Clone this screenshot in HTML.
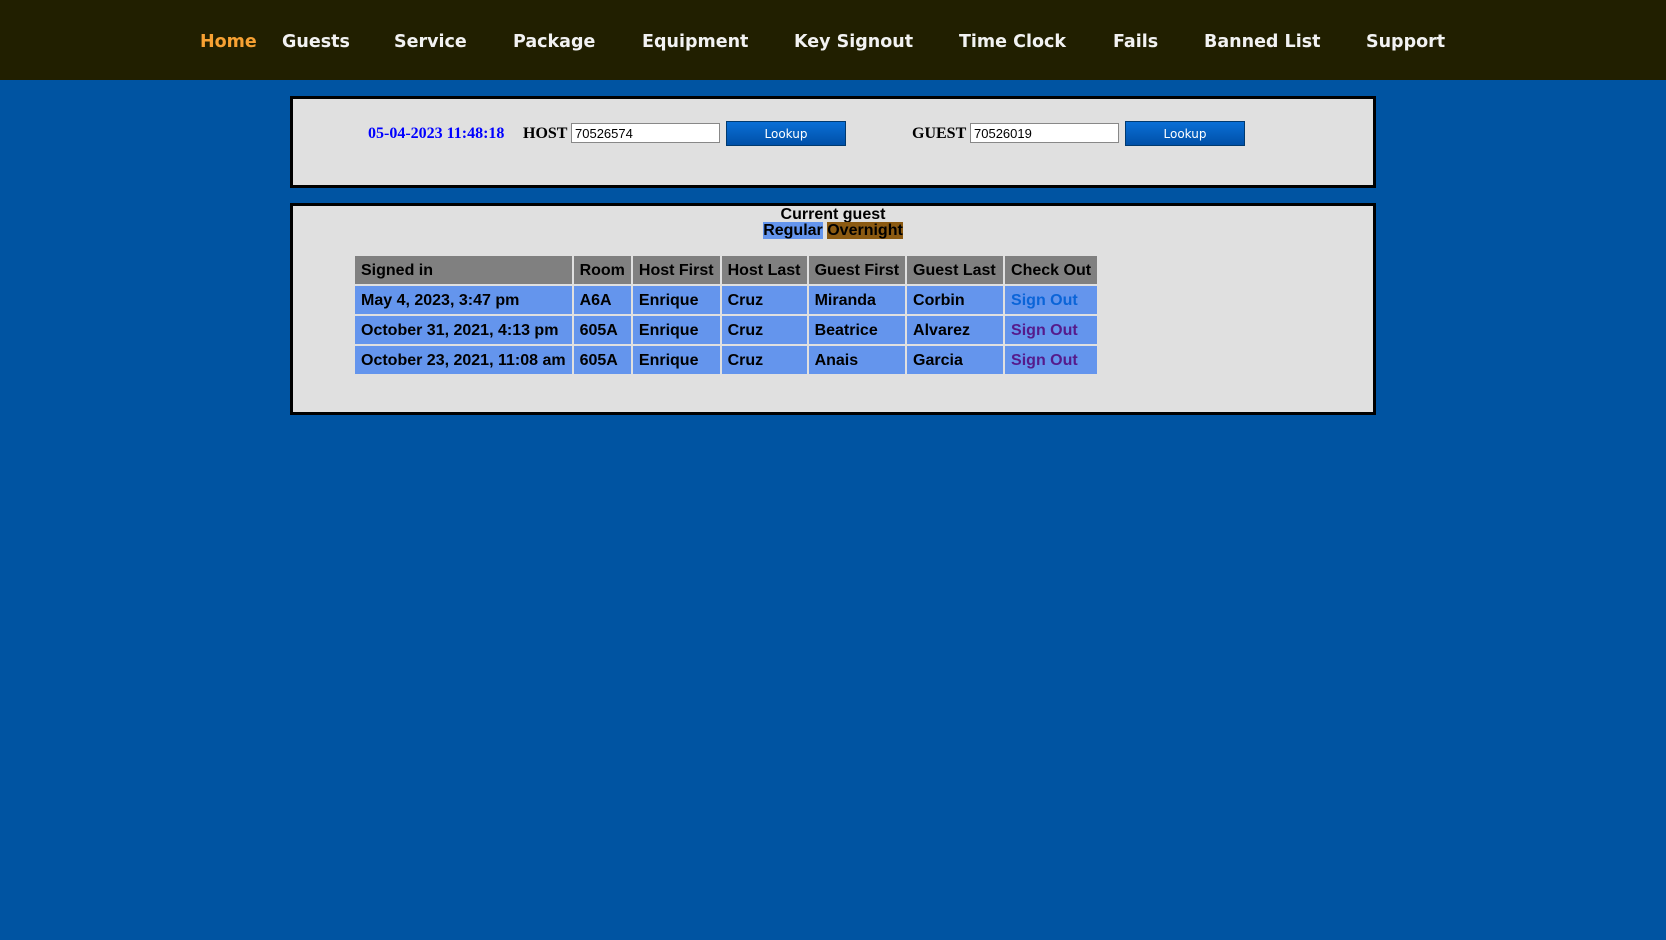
<!DOCTYPE html>
<html><head><style>
body{margin:0;width:1666px;height:940px;background:#0054a2;position:relative;overflow:hidden;font-family:"Liberation Sans",Arial,sans-serif}
.nav{position:absolute;left:0;top:0;width:1666px;height:80px;background:#211f00}
.nav span{position:absolute;top:32px;font-family:"DejaVu Sans",Verdana,sans-serif;font-weight:bold;font-size:17.5px;color:#f2f2f2}
.panel{position:absolute;left:290px;width:1080px;background:#e0e0e0;border:3px solid #000}
.abs{position:absolute}
.lbl{font-family:"Liberation Serif",serif;font-weight:bold;font-size:16px;color:#000}
.inp{background:#fff;border:1px solid #888;height:20px;font-size:13px;line-height:20px;padding-left:3px;box-sizing:border-box;width:149px}
.btn{background:linear-gradient(#0a6fd6,#0050a8);border:1px solid #003a70;color:#fff;font-size:12px;text-align:center;width:120px;height:25px;line-height:25px;box-sizing:border-box;font-family:"DejaVu Sans",sans-serif}
table{position:absolute;left:353px;top:254px;border-spacing:2px;font-weight:bold;font-size:16px;table-layout:fixed}
td,th{height:28px;padding:2px 6px 0;text-align:left;white-space:nowrap;background:#6495ed;box-sizing:border-box;overflow:hidden}
th{background:#808080;font-weight:bold}
</style></head><body>
<div class="nav">
<span style="left:200px;color:#f7a133">Home</span>
<span style="left:282px">Guests</span>
<span style="left:394px">Service</span>
<span style="left:513px">Package</span>
<span style="left:642px">Equipment</span>
<span style="left:794px">Key Signout</span>
<span style="left:959px">Time Clock</span>
<span style="left:1113px">Fails</span>
<span style="left:1204px">Banned List</span>
<span style="left:1366px">Support</span>
</div>
<div class="panel" style="top:96px;height:86px"></div>
<div class="abs lbl" style="left:368px;top:125px;color:#0000ff">05-04-2023 11:48:18</div>
<div class="abs lbl" style="left:523px;top:125px">HOST</div>
<div class="abs inp" style="left:571px;top:123px">70526574</div>
<div class="abs btn" style="left:726px;top:121px">Lookup</div>
<div class="abs lbl" style="left:912px;top:125px">GUEST</div>
<div class="abs inp" style="left:970px;top:123px">70526019</div>
<div class="abs btn" style="left:1125px;top:121px">Lookup</div>
<div class="panel" style="top:203px;height:206px"></div>
<div class="abs" style="left:0;width:1666px;text-align:center;top:207px;font-weight:bold;font-size:16px;line-height:16px">Current guest<br><span style="background:#6495ed">Regular</span> <span style="background:#8b5a12">Overnight</span></div>
<table>
<colgroup><col style="width:216px"><col style="width:57px"><col style="width:86px"><col style="width:85px"><col style="width:96px"><col style="width:96px"><col style="width:90px"></colgroup>
<tr><th>Signed in</th><th>Room</th><th>Host First</th><th>Host Last</th><th>Guest First</th><th>Guest Last</th><th>Check Out</th></tr>
<tr><td>May 4, 2023, 3:47 pm</td><td>A6A</td><td>Enrique</td><td>Cruz</td><td>Miranda</td><td>Corbin</td><td style="color:#0a64d8">Sign Out</td></tr>
<tr><td>October 31, 2021, 4:13 pm</td><td>605A</td><td>Enrique</td><td>Cruz</td><td>Beatrice</td><td>Alvarez</td><td style="color:#551a8b">Sign Out</td></tr>
<tr><td>October 23, 2021, 11:08 am</td><td>605A</td><td>Enrique</td><td>Cruz</td><td>Anais</td><td>Garcia</td><td style="color:#551a8b">Sign Out</td></tr>
</table>
</body></html>
